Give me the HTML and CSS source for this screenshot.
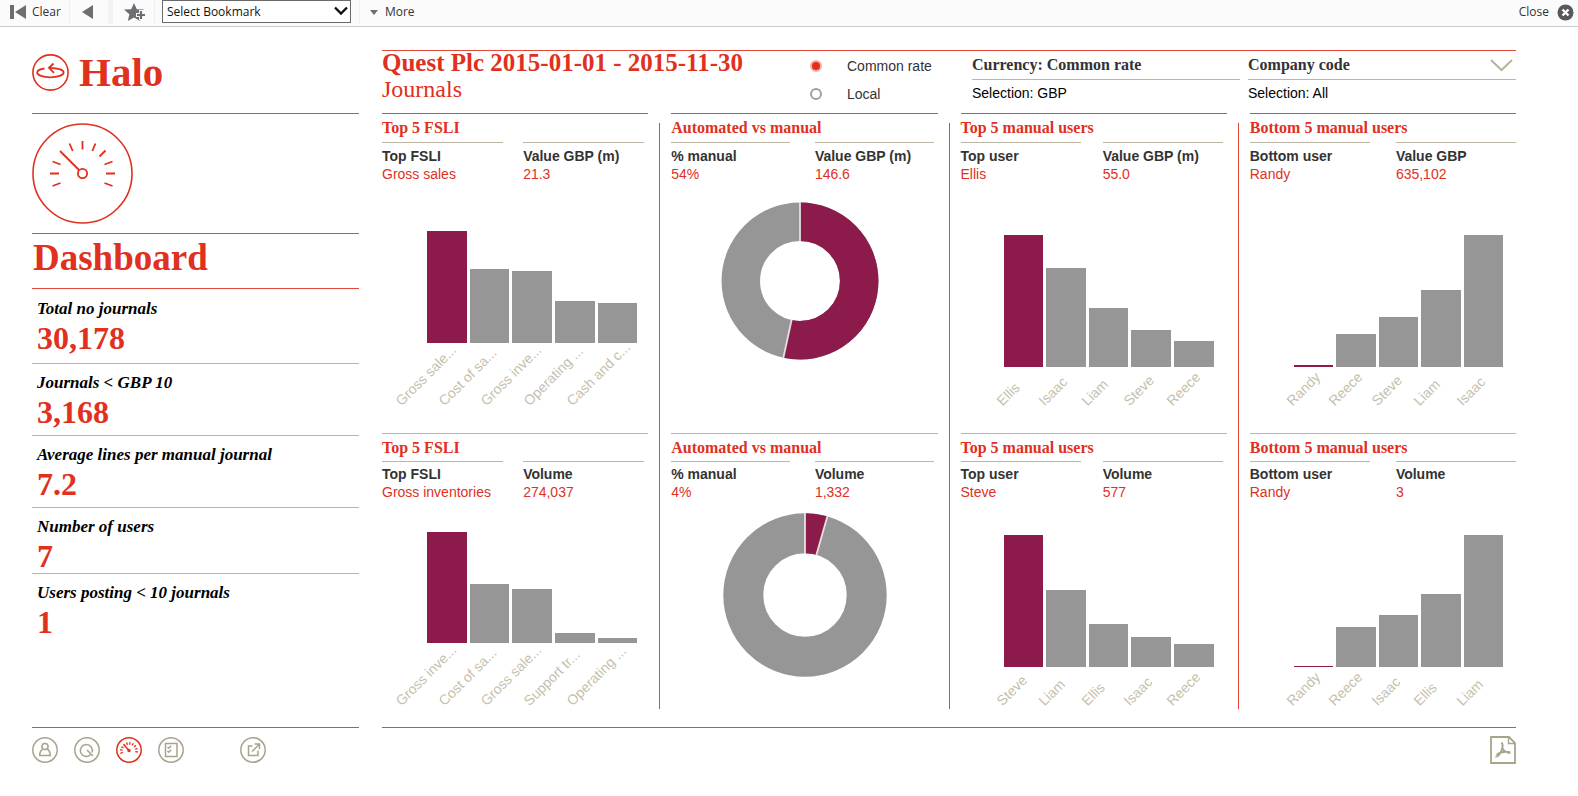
FILE: index.html
```html
<!DOCTYPE html>
<html lang="en">
<head>
<meta charset="utf-8">
<meta name="viewport" content="width=device-width, initial-scale=1">
<title>Halo Dashboard</title>
<link rel="stylesheet" href="styles.css">
</head>
<body>
<header class="toolbar">
  <button class="tool tool-clear" type="button">
    <svg width="17" height="14" viewBox="0 0 17 14"><path d="M0 0h4v14H0zM16 0v14L5 7z" fill="#6d6e71"/></svg>
    Clear
  </button>
  <button class="tool tool-back" type="button" aria-label="Back">
    <svg width="12" height="14" viewBox="0 0 12 14"><path d="M11 0v14L0 7z" fill="#6d6e71"/></svg>
  </button>
  <button class="tool tool-star" type="button" aria-label="Add bookmark">
    <svg width="22" height="19" viewBox="0 0 22 19"><path d="M10 0l2.800 6.200 7.200.4-5.400 4.600 1.600 6.800L10 14.500 3.800 18l1.600-6.800L0 6.600l7.200-.4z" fill="#6d6e71"/><path d="M17 7v10M12 12h10" stroke="#fbfbfb" stroke-width="4"/><path d="M17 8v8M13 12h8" stroke="#6d6e71" stroke-width="2.200"/></svg>
  </button>
  <div class="bookmark">
    <select aria-label="Bookmark"><option>Select Bookmark</option></select>
    <svg class="bookmark-arrow" width="14" height="10" viewBox="0 0 14 10"><path d="M1 1.500l6 6 6-6" fill="none" stroke="#111" stroke-width="2.400"/></svg>
  </div>
  <button class="tool tool-more" type="button">
    <svg width="8" height="5" viewBox="0 0 8 5"><path d="M0 0h8L4 5z" fill="#6d6e71"/></svg>
    More
  </button>
  <button class="tool tool-close" type="button">
    Close
    <svg width="17" height="17" viewBox="0 0 17 17"><circle cx="8.500" cy="8.500" r="8" fill="#58595b"/><path d="M5.500 5.500l6 6m0-6l-6 6" stroke="#fff" stroke-width="2.400"/></svg>
  </button>
</header>

<div class="page">
  <aside class="sidebar">
    <div class="brand">
      <svg width="37" height="37" viewBox="0 0 37 37" fill="none" stroke="#e0301e"><circle cx="18.500" cy="18.500" r="17.600" stroke-width="1.600"/><path d="M12.500 14.500C8 15.200 5.200 16.700 5.200 18.500c0 2.700 5.900 4.800 13.200 4.800s13.200-2.100 13.200-4.800c0-2.600-6-4.500-14.500-4.700M21.500 9.500L17 13.800l5 5" stroke-width="1.800"/></svg>
      <span class="brand-name">Halo</span>
    </div>
    <div class="gauge">
      <svg width="101" height="101" viewBox="0 0 101 101" fill="none" stroke="#e0301e" stroke-width="1.800"><circle cx="50.500" cy="50.500" r="49.500" stroke-width="1.600"/><circle cx="50.500" cy="50.500" r="4.600"/><path d="M28 28l19 19M50.500 18v8.500M37.500 20.500l3.200 7.500M63.500 20.500l-3.200 7.500M73.500 27.500l-6 6M20.500 38.500l8 3M80.500 38.500l-8 3M18 50.500h9M74 50.500h9M20.500 63l8-3M80.500 63l-8-3"/></svg>
    </div>
    <h1 class="page-name">Dashboard</h1>
    <dl class="stats">
      <div class="stat"><dt>Total no journals</dt><dd>30,178</dd></div>
      <div class="stat"><dt>Journals &lt; GBP 10</dt><dd>3,168</dd></div>
      <div class="stat"><dt>Average lines per manual journal</dt><dd>7.2</dd></div>
      <div class="stat"><dt>Number of users</dt><dd>7</dd></div>
      <div class="stat"><dt>Users posting &lt; 10 journals</dt><dd>1</dd></div>
    </dl>
    <nav class="nav" aria-label="Sections">
      <a href="#user" aria-label="User"><svg width="26" height="26" viewBox="0 0 26 26"><circle cx="13" cy="13" r="12.200"/><circle cx="13" cy="9.500" r="3.100"/><path d="M10.500 12.500c-2 1-2.800 2.800-2.800 6h10.600c0-3.200-.8-5-2.800-6"/></svg></a>
      <a href="#query" aria-label="Query"><svg width="26" height="26" viewBox="0 0 26 26"><circle cx="13" cy="13" r="12.200"/><path d="M16.500 17.800A6 6 0 1 1 18 15.500M13 13l6 6"/></svg></a>
      <a class="active" href="#dashboard" aria-label="Dashboard"><svg width="26" height="26" viewBox="0 0 26 26"><circle cx="13" cy="13" r="12.200"/><path d="M8 8l5 5.500"/><circle cx="13" cy="13.500" r="1"/><path d="M5.800 16.500A7.600 7.600 0 1 1 20.200 16.500" stroke-width="2.600" stroke-dasharray="1.300 1.600"/></svg></a>
      <a href="#report" aria-label="Report"><svg width="26" height="26" viewBox="0 0 26 26"><circle cx="13" cy="13" r="12.200"/><path d="M7.500 6.500h11.500v13H7.500zM9.500 10l1.200 1.200 2.500-2.500M9.500 14l1.200 1.200 2.500-2.500"/></svg></a>
      <a class="nav-export" href="#export" aria-label="Export"><svg width="26" height="26" viewBox="0 0 26 26"><circle cx="13" cy="13" r="12.200"/><path d="M12.500 9H8.500v9.500h9.500v-5M12 14.500l7-7M14.500 7h5v5"/></svg></a>
    </nav>
  </aside>

  <main class="main">
    <div class="heading">
      <div class="heading-titles">
        <h2 class="client">Quest Plc 2015-01-01 - 2015-11-30</h2>
        <p class="subject">Journals</p>
      </div>
      <div class="rates" role="radiogroup" aria-label="Rate">
        <label class="rate"><input type="radio" name="rate" checked>Common rate</label>
        <label class="rate"><input type="radio" name="rate">Local</label>
      </div>
      <div class="filter">
        <div class="filter-title">Currency: Common rate</div>
        <p class="filter-value">Selection: GBP</p>
      </div>
      <div class="filter">
        <div class="filter-title">Company code
          <button class="filter-open" type="button" aria-label="Open company code"><svg width="23" height="13" viewBox="0 0 23 13"><path d="M1 1l10.500 10L22 1" fill="none" stroke="#b9b29c" stroke-width="2"/></svg></button>
        </div>
        <p class="filter-value">Selection: All</p>
      </div>
    </div>

    <div class="columns">
      <div class="column column-fsli">
        <section class="panel">
          <h3>Top 5 FSLI</h3>
          <dl class="facts"><div><dt>Top FSLI</dt><dd>Gross sales</dd></div><div><dt>Value GBP (m)</dt><dd>21.3</dd></div></dl>
          <div class="chart chart-long">
            <div class="bars"><i class="lead" style="height:112px"></i><i style="height:74px"></i><i style="height:72px"></i><i style="height:42px"></i><i style="height:40px"></i></div>
            <div class="axis"><span><b>Gross sale...</b></span><span><b>Cost of sa...</b></span><span><b>Gross inve...</b></span><span><b>Operating ...</b></span><span><b>Cash and c...</b></span></div>
          </div>
        </section>
        <section class="panel panel-lower">
          <h3>Top 5 FSLI</h3>
          <dl class="facts"><div><dt>Top FSLI</dt><dd>Gross inventories</dd></div><div><dt>Volume</dt><dd>274,037</dd></div></dl>
          <div class="chart chart-long">
            <div class="bars"><i class="lead" style="height:111px"></i><i style="height:59px"></i><i style="height:54px"></i><i style="height:10px"></i><i style="height:5px"></i></div>
            <div class="axis"><span><b>Gross inve...</b></span><span><b>Cost of sa...</b></span><span><b>Gross sale...</b></span><span><b>Support tr...</b></span><span><b>Operating ...</b></span></div>
          </div>
        </section>
      </div>
      <div class="divider"></div>
      <div class="column column-auto">
        <section class="panel">
          <h3>Automated vs manual</h3>
          <dl class="facts"><div><dt>% manual</dt><dd>54%</dd></div><div><dt>Value GBP (m)</dt><dd>146.6</dd></div></dl>
          <svg class="donut" width="158" height="158" viewBox="-79 -79 158 158" role="img" aria-label="54% manual">
            <g fill="none" stroke-width="38.500" transform="rotate(-90)"><circle r="59.200" stroke="#969696"/><circle r="59.200" stroke="#8c1a4b" pathLength="100" stroke-dasharray="53.400 100"/></g>
            <path d="M0-79v39M-16.700 77l8.400-38.500" stroke="#e4e0e2" stroke-width="1.800"/>
          </svg>
        </section>
        <section class="panel panel-lower">
          <h3>Automated vs manual</h3>
          <dl class="facts"><div><dt>% manual</dt><dd>4%</dd></div><div><dt>Volume</dt><dd>1,332</dd></div></dl>
          <svg class="donut donut-wide" width="164" height="164" viewBox="-82 -82 164 164" role="img" aria-label="4% manual">
            <g fill="none" stroke-width="40" transform="rotate(-90)"><circle r="61.700" stroke="#969696"/><circle r="61.700" stroke="#8c1a4b" pathLength="100" stroke-dasharray="4.400 100"/></g>
            <path d="M0-82v41M22.500-79l-11.300 39.500" stroke="#e4e0e2" stroke-width="1.800"/>
          </svg>
        </section>
      </div>
      <div class="divider"></div>
      <div class="column column-top">
        <section class="panel">
          <h3>Top 5 manual users</h3>
          <dl class="facts"><div><dt>Top user</dt><dd>Ellis</dd></div><div><dt>Value GBP (m)</dt><dd>55.0</dd></div></dl>
          <div class="chart">
            <div class="bars"><i class="lead" style="height:132px"></i><i style="height:99px"></i><i style="height:59px"></i><i style="height:37px"></i><i style="height:26px"></i></div>
            <div class="axis"><span><b>Ellis</b></span><span><b>Isaac</b></span><span><b>Liam</b></span><span><b>Steve</b></span><span><b>Reece</b></span></div>
          </div>
        </section>
        <section class="panel panel-lower">
          <h3>Top 5 manual users</h3>
          <dl class="facts"><div><dt>Top user</dt><dd>Steve</dd></div><div><dt>Volume</dt><dd>577</dd></div></dl>
          <div class="chart">
            <div class="bars"><i class="lead" style="height:132px"></i><i style="height:77px"></i><i style="height:43px"></i><i style="height:30px"></i><i style="height:23px"></i></div>
            <div class="axis"><span><b>Steve</b></span><span><b>Liam</b></span><span><b>Ellis</b></span><span><b>Isaac</b></span><span><b>Reece</b></span></div>
          </div>
        </section>
      </div>
      <div class="divider"></div>
      <div class="column column-bottom">
        <section class="panel">
          <h3>Bottom 5 manual users</h3>
          <dl class="facts"><div><dt>Bottom user</dt><dd>Randy</dd></div><div><dt>Value GBP</dt><dd>635,102</dd></div></dl>
          <div class="chart">
            <div class="bars"><i class="lead" style="height:2px"></i><i style="height:33px"></i><i style="height:50px"></i><i style="height:77px"></i><i style="height:132px"></i></div>
            <div class="axis"><span><b>Randy</b></span><span><b>Reece</b></span><span><b>Steve</b></span><span><b>Liam</b></span><span><b>Isaac</b></span></div>
          </div>
        </section>
        <section class="panel panel-lower">
          <h3>Bottom 5 manual users</h3>
          <dl class="facts"><div><dt>Bottom user</dt><dd>Randy</dd></div><div><dt>Volume</dt><dd>3</dd></div></dl>
          <div class="chart">
            <div class="bars"><i class="lead" style="height:1px"></i><i style="height:40px"></i><i style="height:52px"></i><i style="height:73px"></i><i style="height:132px"></i></div>
            <div class="axis"><span><b>Randy</b></span><span><b>Reece</b></span><span><b>Isaac</b></span><span><b>Ellis</b></span><span><b>Liam</b></span></div>
          </div>
        </section>
      </div>
    </div>
    <footer class="footer">
      <a href="#pdf" aria-label="Export to PDF"><svg width="26" height="28" viewBox="0 0 26 28" fill="none" stroke="#aaa38b"><path d="M1 1h18l6 6v20H1z" stroke-width="1.800"/><path d="M18.500 1v6.500H25" stroke-width="1.400"/><path d="M11.500 6.500c1.800 2 1.300 5-.2 8.500C9.800 18.500 7.500 21 5.500 20.500M12 11c1 3.500 3.500 5.500 8 6M6.500 19c3.500-3 8.500-4 14-2.500" stroke-width="1.900"/></svg></a>
    </footer>
  </main>
</div>
</body>
</html>
```
FILE: styles.css
```css
:root {
  --red: #e0301e;
  --rule: #e4483a;
  --tan: #bdb6a2;
  --wine: #8c1a4b;
  --grey: #969696;
  --ink: #333;
  --serif: Georgia, "Liberation Serif", serif;
  --sans: "Liberation Sans", Arial, sans-serif;
}

* { box-sizing: border-box; }

body {
  margin: 0;
  min-height: 100vh;
  display: flex;
  flex-direction: column;
  background: #fff;
  color: var(--ink);
  font: 14px/18px var(--sans);
}

h1, h2, h3, p, dl, dd { margin: 0; }

button {
  border: 0;
  padding: 0;
  background: none;
  color: inherit;
  font: inherit;
}

svg { display: block; flex: none; }

/* Toolbar */
.toolbar {
  display: flex;
  align-items: stretch;
  height: 27px;
  padding-bottom: 2px;
  border-bottom: 1px solid #c8cacb;
  background: #fbfbfb;
  font: 12px/16px "Open Sans", sans-serif;
}

.tool { display: flex; align-items: center; }
.tool-clear { gap: 5px; padding: 0 8px 0 10px; border-right: 1px solid #f0f0f0; }
.tool-back { padding: 0 14px 0 12px; }
.tool-star { padding: 0 8px 0 11px; border-left: 5px solid #f3f3f3; border-right: 1px solid #f0f0f0; }
.tool-more { gap: 7px; margin-left: 8px; padding-left: 10px; border-left: 1px solid #f0f0f0; }
.tool-close { gap: 8px; margin-left: auto; padding-right: 4px; }

.bookmark { position: relative; width: 189px; height: 23px; margin-left: 7px; }

.bookmark select {
  width: 100%;
  height: 100%;
  padding: 0 4px;
  appearance: none;
  border: 1px solid #6a6a6a;
  border-radius: 0;
  background: #fff;
  color: #111;
  font: inherit;
}

.bookmark-arrow { position: absolute; right: 3px; top: 6px; pointer-events: none; }

/* Page frame */
.page {
  flex: 1;
  display: flex;
  gap: 23px;
  padding: 0 62px 33px 32px;
}

.sidebar { flex: 0 0 327px; display: flex; flex-direction: column; }
.main { flex: 1; display: flex; flex-direction: column; padding-top: 23px; }

/* Sidebar */
.brand {
  display: flex;
  align-items: center;
  gap: 10px;
  height: 86px;
  padding-top: 4px;
  color: var(--red);
}

.brand-name { font: bold 41px/44px var(--serif); }
.gauge { padding: 9px 0; border-top: 1px solid var(--rule); }

.page-name {
  padding: 4px 0 10px 1px;
  border: solid var(--rule);
  border-width: 1px 0;
  color: var(--red);
  font: bold 37px/40px var(--serif);
}

.stats { flex: 1; }
.stat { padding: 9px 5px 6px; border-bottom: 1px solid var(--tan); }
.stat:first-child { padding: 10px 5px 8px; }
.stat:nth-child(4) { padding-bottom: 0; }
.stat:last-child { border-bottom: 0; }
.stat dt { color: #000; font: italic bold 17px/20px var(--serif); }
.stat dd { padding-top: 3px; color: var(--red); font: bold 32px/33px var(--serif); }

.nav {
  display: flex;
  gap: 16px;
  height: 36px;
  padding-top: 9px;
  border-top: 1px solid var(--rule);
}

.nav svg { fill: none; stroke: #aaa38b; stroke-width: 1.5; }
.nav .active svg { stroke: var(--red); }
.nav-export { margin-left: 40px; }

/* Heading */
.heading {
  display: flex;
  height: 63px;
  border-top: 1px solid var(--rule);
}

.heading-titles { flex: 1; color: var(--red); white-space: nowrap; }
.client { font: bold 25px/24px var(--serif); }
.subject { font: 24px/29px var(--serif); }

.rates { display: flex; flex-direction: column; gap: 10px; width: 162px; padding-top: 6px; }
.rate { display: flex; align-items: center; gap: 25px; }

.rate input {
  width: 12px;
  height: 12px;
  margin: 0;
  appearance: none;
  border: 2px solid #a0a0a0;
  border-radius: 50%;
  background: #fff;
}

.rate input:checked { border-color: #f5aea6; background: var(--red); }

.filter { width: 268px; }
.filter + .filter { margin-left: 8px; }

.filter-title {
  display: flex;
  justify-content: space-between;
  align-items: center;
  height: 29px;
  padding-right: 3px;
  border-bottom: 1px solid var(--tan);
  font: bold 16px/20px var(--serif);
}

.filter-value { padding-top: 4px; color: #000; }

/* Panels */
.columns {
  flex: 1;
  display: grid;
  grid-template-columns: 1fr 1px 1fr 1px 1fr 1px 1fr;
  gap: 11px;
}

.divider { margin-top: 10px; background: var(--rule); }
.column { display: flex; flex-direction: column; min-width: 0; }

.panel {
  display: flex;
  flex-direction: column;
  min-height: 320px;
  padding-bottom: 24px;
  border-top: 1px solid var(--rule);
}

.panel-lower { min-height: 276px; padding-bottom: 0; border-top-color: var(--tan); }
.panel h3 { color: var(--red); font: bold 16px/28px var(--serif); }
.panel-lower h3 { padding-top: 1px; line-height: 26px; }

.facts {
  display: grid;
  grid-template-columns: 1fr 1fr;
  column-gap: 20px;
  padding-right: 4px;
}

.column-auto .facts { column-gap: 25px; }
.column-top .facts { column-gap: 22px; }
.column-bottom .facts { column-gap: 26px; padding-right: 0; }

.facts > div { padding-top: 5px; border-top: 1px solid var(--tan); white-space: nowrap; }
.panel-lower .facts > div { padding-top: 4px; }
.facts dt { font-weight: bold; line-height: 17px; }
.facts dd { color: var(--red); }

/* Bar charts */
.chart { margin: auto 13px 0 43px; }
.column-fsli .chart { margin: auto 11px 0 45px; }
.column-bottom .chart { margin-left: 44px; }

.bars, .axis {
  display: grid;
  grid-template-columns: repeat(5, 1fr);
  column-gap: 3px;
}

.bars { align-items: end; }
.bars i { background: var(--grey); }
.bars .lead { background: var(--wine); }

.axis { height: 42px; color: #c5bfad; }
.chart-long .axis { height: 66px; }
.axis span { display: flex; align-items: flex-end; min-width: 0; padding-bottom: 1px; }

.axis b {
  font-weight: normal;
  line-height: 14px;
  white-space: nowrap;
  transform: rotate(-45deg);
  transform-origin: left bottom;
}

.chart-long .axis b { margin-left: -24px; }

/* Donuts */
.donut { margin: 19px 0 0 50px; }
.donut-wide { margin: 12px 0 0 52px; }

.footer {
  display: flex;
  justify-content: flex-end;
  height: 36px;
  margin-top: 18px;
  padding-top: 8px;
  border-top: 1px solid var(--rule);
}
```
